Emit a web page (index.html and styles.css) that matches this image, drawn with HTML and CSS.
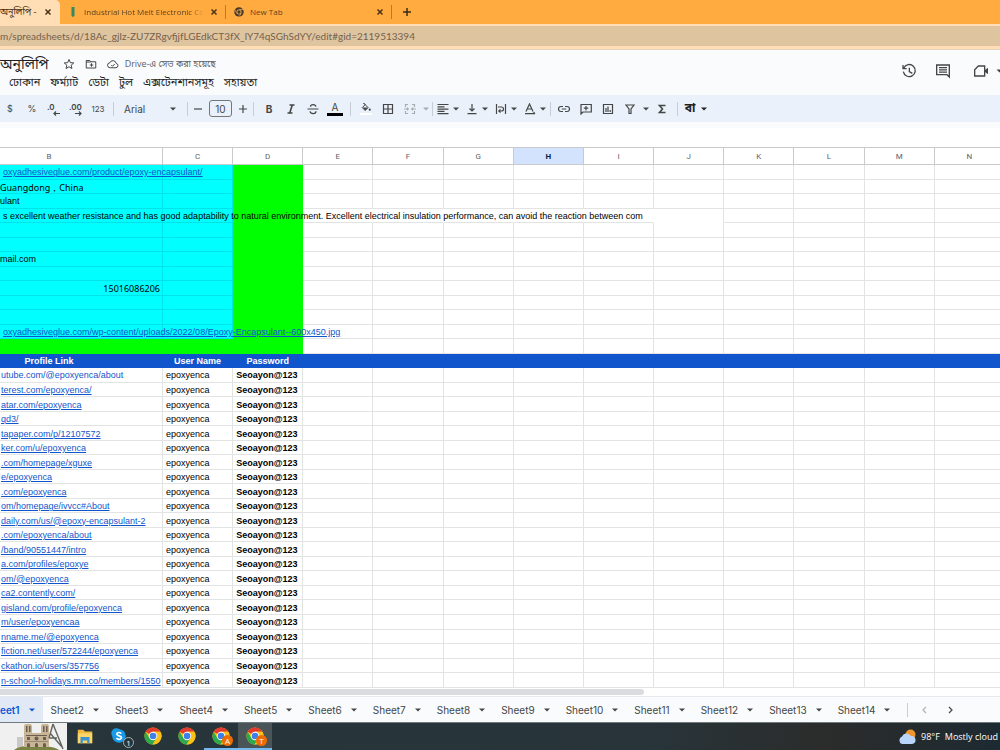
FILE: index.html
```html
<!DOCTYPE html>
<html lang="bn">
<head>
<meta charset="utf-8">
<title>অনুলিপি</title>
<link rel="stylesheet" href="styles.css">
</head>
<body>
<svg class="defs" width="0" height="0" aria-hidden="true">
  <defs>
    <symbol id="x" viewBox="0 0 8 8"><path d="M1.500 1.500l5 5M6.500 1.500l-5 5" stroke="#4a3217" stroke-width="1.500" fill="none"/></symbol>
    <symbol id="caret" viewBox="0 0 6 4"><path d="M0 .5h6L3 3.5z" fill="currentColor"/></symbol>
    <symbol id="chrome" viewBox="0 0 20 20">
      <circle cx="10" cy="10" r="9.5" fill="#fbc116"/>
      <path d="M10 10L1.8 5.2A9.5 9.5 0 0 1 18.2 5.3H10z" fill="#e33b2e"/>
      <path d="M1.8 5.2A9.5 9.5 0 0 0 9.6 19.5L14 12.3 10 10 6 12.3z" fill="#2da94f"/>
      <path d="M10 5.3h8.2a9.5 9.5 0 0 1-8.6 14.2L14 12.3z" fill="#fbc116"/>
      <circle cx="10" cy="10" r="4.7" fill="#fff"/><circle cx="10" cy="10" r="3.7" fill="#3f7fe8"/>
    </symbol>
  </defs>
</svg>

<div class="tabstrip">
  <div class="tab current"><span class="tab-title">অনুলিপি -</span><button aria-label="Close tab"><svg><use href="#x"/></svg></button></div>
  <div class="tab second">
    <svg class="fav" viewBox="0 0 10 10"><path d="M3.500 0h3v9l-1.500 1-1.500-1z" fill="#2f8b62"/></svg>
    <span class="tab-title fade">Industrial Hot Melt Electronic Co</span><button aria-label="Close tab"><svg><use href="#x"/></svg></button>
  </div>
  <div class="tab third">
    <svg class="fav" viewBox="0 0 20 20"><circle cx="10" cy="10" r="9.500" fill="#4c3a25"/><path d="M10 5h9M5.500 12.500L1.500 5M14.500 12.500L10 19.500" stroke="#dfa45a" stroke-width="1.500"/><circle cx="10" cy="10" r="5" fill="#e6ac62"/><circle cx="10" cy="10" r="3.300" fill="#4c3a25"/></svg>
    <span class="tab-title">New Tab</span><button aria-label="Close tab"><svg><use href="#x"/></svg></button>
  </div>
  <button class="new-tab" aria-label="New tab"><svg viewBox="0 0 10 10"><path d="M5 1v8M1 5h8" stroke="#3f2c14" stroke-width="1.500"/></svg></button>
</div>
<div class="address"><input aria-label="Address" value="m/spreadsheets/d/18Ac_gjIz-ZU7ZRgvfjjfLGEdkCT3fX_lY74qSGhSdYY/edit#gid=2119513394"></div>

<header class="doc-head">
  <div class="doc-left">
    <div class="title-row">
      <h1>অনুলিপি</h1>
      <button aria-label="Star"><svg viewBox="0 0 24 24"><path d="M12 3l2.700 6.300 6.800.6-5.200 4.500 1.600 6.700L12 17.500l-5.900 3.600 1.600-6.700-5.200-4.500 6.800-.6z" class="line"/></svg></button>
      <button aria-label="Move"><svg viewBox="0 0 24 24"><path d="M2.500 5h7l2 2.500h10V20h-19zM2.500 8h9M13 10.500v7M9.500 14h7" class="line"/></svg></button>
      <button aria-label="Cloud status"><svg viewBox="0 0 24 24"><path d="M6.500 19.500a5 5 0 0 1-.7-10 6.500 6.500 0 0 1 12.500 1.300 4.400 4.400 0 0 1-.3 8.700zM8.500 14l2.500 2.500 4.500-4.500" class="line"/></svg></button>
      <span class="saved">Drive-এ সেভ করা হয়েছে</span>
    </div>
    <nav class="menus"><button>ঢোকান</button><button>ফর্ম্যাট</button><button>ডেটা</button><button>টুল</button><button>এক্সটেনশানসমূহ</button><button>সহায়তা</button></nav>
  </div>
  <div class="doc-right">
    <button aria-label="Version history"><svg viewBox="0 0 24 24"><path d="M4.200 7.500A9 9 0 1 1 3.500 13M3 3v5.500h5.500M12.500 7v6l4.500 2.500" class="line"/></svg></button>
    <button aria-label="Comments"><svg viewBox="0 0 24 24"><path d="M2.500 3h19v18l-3.500-3.500H2.500zM6 7h12M6 10.300h12M6 13.600h12" class="line"/></svg></button>
    <button aria-label="Meet" class="meet"><svg viewBox="0 0 24 24"><path d="M8 4.500h9.500v15H2.500V10z" class="line"/><path d="M17.500 11l5-4v10l-5-4z" fill="#444746"/></svg><svg class="caret"><use href="#caret"/></svg></button>
  </div>
</header>

<div class="toolbar" role="toolbar" aria-label="Formatting">
  <button class="dollar">$</button><button class="percent">%</button>
  <button aria-label="Decrease decimals"><svg class="wide" viewBox="0 0 14 14"><text x="0" y="8" class="glyph">.0</text><path d="M13 11.500H7M9 9.500l-2 2 2 2" class="thin"/></svg></button>
  <button aria-label="Increase decimals"><svg class="wide" viewBox="0 0 14 14"><text x="0" y="8" class="glyph">.00</text><path d="M6 11.500h6M10 9.500l2 2-2 2" class="thin"/></svg></button>
  <button class="small">123</button>
  <i class="sep"></i>
  <button class="font">Arial<svg class="caret"><use href="#caret"/></svg></button>
  <i class="sep"></i>
  <button class="step" aria-label="Smaller"><svg viewBox="0 0 10 10"><path d="M1 5h8" class="thin"/></svg></button>
  <input class="size" aria-label="Font size" value="10">
  <button class="step" aria-label="Larger"><svg viewBox="0 0 10 10"><path d="M1 5h8M5 1v8" class="thin"/></svg></button>
  <i class="sep"></i>
  <button class="bold">B</button>
  <button aria-label="Italic"><svg viewBox="0 0 12 12"><path d="M4.500 2h5M2.500 10h5M7.300 2L4.700 10" class="heavy"/></svg></button>
  <button aria-label="Strikethrough"><svg viewBox="0 0 12 12"><path d="M.5 6h11M9 3.700C8.500 1 3.500 1 3.500 3.700M3 8.300c.5 3 6 3 6 0" class="thin"/></svg></button>
  <button class="text-color" aria-label="Text colour"><span>A</span></button>
  <i class="sep"></i>
  <button class="fill" aria-label="Fill colour"><svg viewBox="0 0 12 12"><path d="M3 0l5.500 5.500L5 9 1.500 5.500 5 2z" class="thin"/><path d="M2 5.500h6.500L5 9z" fill="#444746"/><circle cx="10.500" cy="8" r="1.300" fill="#444746"/></svg></button>
  <button aria-label="Borders"><svg viewBox="0 0 12 12"><path d="M1.500 1.500h9v9h-9zM6 1.500v9M1.500 6h9" class="thin"/></svg></button>
  <button class="off" aria-label="Merge"><svg viewBox="0 0 12 12"><path d="M4 1.500H1.500V4M8 1.500h2.500V4M4 10.500H1.500V8M8 10.500h2.500V8M0 6h4M12 6H8M3 4.700L4.300 6 3 7.300M9 4.700L7.700 6 9 7.300" class="thin"/></svg></button>
  <button class="drop off" aria-label="Merge options"><svg class="caret"><use href="#caret"/></svg></button>
  <i class="sep snug-left"></i>
  <div class="pairs">
    <button aria-label="Horizontal align"><svg viewBox="0 0 12 12"><path d="M.5 1.500h11M.5 3.800h7M.5 6.100h11M.5 8.400h7M.5 10.700h11" class="thin"/></svg><svg class="caret"><use href="#caret"/></svg></button>
    <button aria-label="Vertical align"><svg viewBox="0 0 12 12"><path d="M6 1v7M3.500 5.500L6 8l2.500-2.500M1.500 10.700h9" class="thin"/></svg><svg class="caret"><use href="#caret"/></svg></button>
    <button aria-label="Wrapping"><svg viewBox="0 0 12 12"><path d="M1.500 1v10M10.500 1v10M3 4h3.500a2 2 0 0 1 0 4H4M5.500 6.300L3.800 8l1.700 1.700" class="thin"/></svg><svg class="caret"><use href="#caret"/></svg></button>
    <button aria-label="Rotation"><svg viewBox="0 0 12 12"><path d="M2 8.500L5.500 1 9 8.500M3.200 6h4.600M1 10.700h10M9.500 9.200l1.500 1.500" class="thin"/></svg><svg class="caret"><use href="#caret"/></svg></button>
  </div>
  <i class="sep snug-left"></i>
  <div class="inserts">
    <button aria-label="Link"><svg viewBox="0 0 12 12"><path d="M5 3.500H3a2.500 2.500 0 0 0 0 5h2M7 3.500h2a2.500 2.500 0 0 1 0 5H7M3.800 6h4.400" class="thin"/></svg></button>
    <button aria-label="Comment"><svg viewBox="0 0 12 12"><path d="M1 11V1.500h10.300v7.500H3zM6 3v4.500M3.800 5.200h4.500" class="thin"/></svg></button>
    <button aria-label="Chart"><svg viewBox="0 0 12 12"><path d="M1.500 1.500h9v9h-9zM4 5v4M6 3.500V9M8.200 7v2" class="thin"/></svg></button>
    <button aria-label="Filter"><svg viewBox="0 0 12 12"><path d="M2 2h8L7 6v4.500H5V6z" class="thin"/></svg></button>
  </div>
  <button class="drop" aria-label="Filter views"><svg class="caret"><use href="#caret"/></svg></button>
  <button aria-label="Functions"><svg viewBox="0 0 12 12"><path d="M9.500 2.500H3.500L6.500 6 3.500 9.500h6" class="heavy"/></svg></button>
  <i class="sep"></i>
  <button class="lang">বা<svg class="caret"><use href="#caret"/></svg></button>
</div>
<div class="formula"></div>

<main class="sheet"><table id="grid"></table></main>
<div class="scroll"><div class="thumb"></div></div>

<nav class="sheets" id="sheets"></nav>

<footer class="taskbar">
  <svg class="cathedral" viewBox="0 0 67 27" preserveAspectRatio="none">
    <path fill="#f0f0f0" d="M0 0h67v27H0z"/><path fill="#c9c9c9" d="M17 14h6v11h-6z"/>
    <path fill="#7b8342" d="M14 27q5-4 15-4h15q12 1 15 4z"/>
    <path fill="#c8b596" d="M24 3l1-2h6l1 2v7h9V3l1-2h6l1 2v21H24z"/>
    <path fill="#6b5d50" d="M26 3h1.500v6H26zM29 3h1.500v6H29zM43 3h1.500v6H43zM46 3h1.500v6H46zM26 12h21v1H26zM25 18h23v.6H25z"/>
    <circle cx="36.500" cy="15.500" r="2" fill="#6b5d50"/><path fill="#6b5d50" d="M27 24v-3q1.500-2 3 0v3zM35 24v-3q1.500-2 3 0v3zM43 24v-3q1.500-2 3 0v3zM27 14h3v3h-3zM43 14h3v3h-3z"/>
    <path d="M53 1l-4 14M53 1l10 25M50 10l12 14M49 15h8" stroke="#62645f" stroke-width="1.400" fill="none"/>
  </svg>
  <button class="app" aria-label="File Explorer"><svg viewBox="0 0 20 20"><path d="M2 3h6l2 2h8v13H2z" fill="#f2b93c"/><path d="M2 7h16v11H2z" fill="#fbd568"/><path d="M5 11h10v7h-2.500v-3h-5v3H5z" fill="#3c93cf"/></svg></button>
  <button class="app" aria-label="Skype"><svg viewBox="0 0 20 20"><circle cx="7" cy="7" r="5.500" fill="#1a9be6"/><circle cx="10" cy="10" r="7.500" fill="#1a9be6"/><path d="M12.500 7.300C11.500 5.500 7.500 5.600 7.500 7.900c0 2.500 5.200 1.400 5.200 3.900 0 2.400-4.200 2.500-5.400.4" stroke="#fff" stroke-width="1.800" fill="none"/></svg><span class="count">1</span></button>
  <button class="app" aria-label="Chrome"><svg><use href="#chrome"/></svg></button>
  <button class="app" aria-label="Chrome"><svg><use href="#chrome"/></svg></button>
  <button class="app running" aria-label="Chrome A"><svg><use href="#chrome"/></svg><span class="who">A</span></button>
  <button class="app running active" aria-label="Chrome T"><svg><use href="#chrome"/></svg><span class="who">T</span></button>
  <div class="weather"><svg viewBox="0 0 18 16"><circle cx="12.500" cy="5.500" r="5" fill="#f0952c"/><path d="M4 15a4 4 0 0 1 0-7.500 5 5 0 0 1 9-.5 4 4 0 0 1 1 8z" fill="#b9d6fa"/></svg><span>98°F</span><span>Mostly cloud</span></div>
</footer>
<script src="script.js"></script>
</body>
</html>
```
FILE: styles.css
```css
* { box-sizing: border-box; }
html, body { height: 100%; }
body {
  margin: 0;
  display: flex;
  flex-direction: column;
  overflow: hidden;
  background: #fff;
  color: #444746;
  font-family: "Open Sans", "Noto Sans", "Noto Sans Bengali", sans-serif;
}
button, input { font: inherit; color: inherit; border: 0; padding: 0; margin: 0; background: none; }
button { display: flex; align-items: center; justify-content: center; white-space: nowrap; }
svg { display: block; flex: none; }
.defs { position: absolute; }
.line { fill: none; stroke: #444746; stroke-width: 2; }
.thin { fill: none; stroke: currentColor; stroke-width: 1.2; }
.heavy { fill: none; stroke: currentColor; stroke-width: 1.6; }
.caret { width: 6px; height: 4px; }

/* browser chrome */
.tabstrip { flex: none; height: 24px; display: flex; align-items: center; background: #ffab40; color: #5c4322; font-size: 8px; overflow: hidden; }
.tab { height: 24px; display: flex; align-items: center; gap: 6px; white-space: nowrap; }
.tab-title { flex: 1; overflow: hidden; line-height: 16px; }
.tab button svg { width: 8px; height: 8px; }
.current { width: 60px; padding-right: 8px; background: #ffdeb5; border-radius: 0 5px 0 0; color: #3f2c14; font-size: 9px; }
.second { width: 166px; padding: 0 7px 0 8px; border-right: 1px solid #b77b2f; height: 14px; }
.third { width: 166px; padding: 0 7px 0 8px; border-right: 1px solid #b77b2f; height: 14px; }
.fav { width: 10px; height: 10px; }
.fade { -webkit-mask-image: linear-gradient(90deg, #000 88%, transparent); mask-image: linear-gradient(90deg, #000 88%, transparent); }
.new-tab { margin-left: 10px; }
.new-tab svg { width: 10px; height: 10px; }
.address { flex: none; padding: 2px 0 3px; height: 26px; background: #ffdeb5; border-bottom: 1px solid #e6d3bb; }
.address input { display: block; width: 100%; height: 20px; background: #dfc4a0; color: #75624b; font-family: Lato, sans-serif; font-size: 10px; outline: 0; }

/* document header */
.doc-head { flex: none; height: 45px; display: flex; justify-content: space-between; background: #f9fbfd; }
.doc-left { padding-top: 4px; }
.title-row { display: flex; align-items: center; height: 20px; }
h1 { margin: 0 14px 0 0; font-size: 14px; font-weight: 400; line-height: 20px; color: #1f1f1f; white-space: nowrap; }
.title-row button { margin-right: 10px; }
.title-row button svg { width: 12px; height: 12px; }
.title-row button:nth-of-type(3) { margin-right: 6px; }
.saved { font-size: 9px; line-height: 16px; color: #5f6368; white-space: nowrap; }
.menus { display: flex; gap: 10px; padding-left: 9px; font-size: 11px; line-height: 15px; color: #1f1f1f; }
.doc-right { display: flex; align-items: center; gap: 18px; padding-bottom: 3px; height: 44px; margin-right: -3px; }
.doc-right button > svg:first-child { width: 16px; height: 16px; }
.doc-right .meet { gap: 7px; margin-left: 4px; }
.doc-right .meet .caret { width: 7px; }

/* toolbar */
.toolbar { flex: none; height: 27px; display: flex; align-items: center; margin-left: -1px; background: #eaf1fa; font-family: Inter, sans-serif; font-size: 10px; }
.toolbar button { flex: none; width: 22px; height: 22px; }
.toolbar svg:not(.caret) { width: 12px; height: 12px; }
.toolbar svg.wide { width: 14px; height: 14px; overflow: visible; }
.glyph { font: 600 8px Inter, sans-serif; fill: #444746; }
.sep { flex: none; width: 1px; height: 14px; margin: 0 4px; background: #c7cdd6; }
.snug-left { margin-left: 1px; }
.toolbar .small, .toolbar .percent, .toolbar .dollar { font-size: 9px; }
.toolbar .small { font-size: 8px; }
.toolbar .font { width: 65px; padding: 0 7px 0 6px; justify-content: space-between; }
.toolbar .step { width: 12px; }
.toolbar .step svg { width: 10px; height: 10px; }
.size { width: 23px; height: 17px; margin: 0 5px; border: 1px solid #747775; border-radius: 3px; text-align: center; }
.toolbar .bold { font-weight: 700; }
.text-color span { width: 16px; border-bottom: 3px solid #000; line-height: 12px; }
.fill svg { border-bottom: 2px solid #fff; }
.off { opacity: .4; }
.toolbar .drop { width: 10px; }
.pairs { display: flex; gap: 4px; }
.toolbar .pairs button { width: 25px; justify-content: flex-start; gap: 4px; }
.inserts { display: flex; margin-left: -2px; }
.toolbar .lang { width: 28px; gap: 6px; font-size: 12px; font-weight: 700; color: #1f1f1f; font-family: "Noto Sans Bengali", "Noto Sans", sans-serif; }
.formula { flex: none; height: 25px; background: #fff; border-top: 6px solid #f9fbfd; }

/* grid */
.sheet { flex: 1; min-height: 0; overflow: hidden; }
table { width: calc(100% + 5px); height: 100%; table-layout: fixed; border-collapse: separate; border-spacing: 0; font-family: "Liberation Sans", Arial, sans-serif; font-size: 9px; line-height: 11px; color: #000; }
th, td { padding: 0; border: 0 solid #e2e3e3; border-width: 0 1px 1px 0; white-space: nowrap; text-align: left; }
tbody th, tbody td { padding-top: 2px; }
thead th { height: 18px; border-color: #c8cacc; border-top: 1px solid #c8cacc; text-align: center; font-family: Roboto, sans-serif; font-size: 8px; font-weight: 400; color: #5f6368; }
thead .first { width: 163px; }
thead .first, .band .first { padding-right: 64px; }
thead .picked { background: #d3e3fd; color: #041e49; font-weight: 700; }
.cyan { background: #0ff; border-color: #00e3e8; }
.green { background: #0f0; border-color: #0f0; }
.band, .band th { background: #1155cc; border-color: #1155cc; }
.band th { color: #fff; text-align: center; font-weight: 700; }
td a { color: #1155cc; text-decoration: underline; }
.plain a { text-decoration: none; }
.clip { overflow: hidden; padding-left: 1px; }
.lead { padding-left: 3px; }
.number { padding-right: 2px; text-align: right; font-family: "Noto Sans", sans-serif; }
.wide-face { font-family: "Noto Sans", sans-serif; }
.user { padding-left: 3px; }
.pass { padding-left: 3px; font-weight: 700; }
.open { border-right-color: transparent; }
.cover { background: #fff; border-bottom-color: #fff; }
.scroll { flex: none; height: 9px; padding: 1px 0; border-bottom: 1px solid #e6e9ed; }
.thumb { width: 64.4%; height: 6px; border-radius: 0 3px 3px 0; background: #dadce0; }

/* sheet tabs */
.sheets { flex: none; height: 25px; display: flex; align-items: stretch; background: #f9fbfd; font-family: Inter, sans-serif; font-size: 10px; }
.sheets .name { padding: 0 8px; gap: 9px; color: #444746; }
.sheets .on { padding-left: 0; background: #e1e9f7; color: #0b57d0; font-weight: 600; }
.sheets .sep { align-self: center; margin: 0 12px 0 9px; }
.sheets .arrow { width: 8px; margin-right: 19px; }
.sheets .arrow svg { width: 6px; height: 8px; }
.faded { opacity: .4; }

/* taskbar */
.taskbar { flex: none; height: 28px; display: flex; align-items: stretch; overflow: hidden; border-top: 1px solid #6f7a7d; background: linear-gradient(90deg, #27363b, #28343a 65%, #2b2c2b 83%, #1d2a32); color: #fff; }
.cathedral { width: 67px; height: 27px; margin-right: 1px; }
.app { position: relative; flex: none; width: 34px; border-bottom: 2px solid transparent; }
.app svg { width: 18px; height: 18px; }
.running { border-bottom-color: #76b9ed; background-clip: padding-box; }
.active { background-color: #4b5558; }
.count, .who { position: absolute; right: 2px; bottom: 0; width: 11px; height: 11px; border-radius: 50%; text-align: center; font: 8px/11px "Open Sans", sans-serif; }
.count { background: #27343a; border: 1px solid #aab1b4; line-height: 9px; }
.who { right: 5px; bottom: 2px; background: #ef6c00; }
.weather { display: flex; flex: none; align-items: center; gap: 5px; width: 102px; margin-left: auto; white-space: nowrap; font-size: 9px; }
.weather svg { width: 18px; height: 16px; }
```
FILE: script.js
```js
const columns = ["B", "C", "D", "E", "F", "G", "H", "I", "J", "K", "L", "M", "N"];
const info = [
  { link: "oxyadhesiveglue.com/product/epoxy-encapsulant/", css: "lead" },
  { text: "Guangdong，China", css: "wide-face" },
  { text: "ulant" },
  { text: "s excellent weather resistance and has good adaptability to natural environment. Excellent electrical insulation performance, can avoid the reaction between com", css: "lead", long: true },
  {}, {},
  { text: "mail.com" },
  {},
  { text: "15016086206", css: "number" },
  {}, {},
  { link: "oxyadhesiveglue.com/wp-content/uploads/2022/08/Epoxy-Encapsulant--600x450.jpg", css: "lead" },
  { allGreen: true }
];
const profiles = [
  "utube.com/@epoxyenca/about", "terest.com/epoxyenca/", "atar.com/epoxyenca", "qd3/",
  "tapaper.com/p/12107572", "ker.com/u/epoxyenca", ".com/homepage/xguxe", "e/epoxyenca",
  ".com/epoxyenca", "om/homepage/ivvcc#About", "daily.com/us/@epoxy-encapsulant-2",
  ".com/epoxyenca/about", "/band/90551447/intro", "a.com/profiles/epoxye", "om/@epoxyenca",
  "ca2.contently.com/", "gisland.com/profile/epoxyenca", "m/user/epoxyencaa",
  "nname.me/@epoxyenca", "fiction.net/user/572244/epoxyenca", "ckathon.io/users/357756",
  "n-school-holidays.mn.co/members/1550"
];
const anchor = (t) => `<a href="#">${t}</a>`;
const blanks = (n) => "<td></td>".repeat(n);

let html = "<thead><tr>" + columns.map((c, i) =>
  `<th scope="col" class="${i === 0 ? "first" : ""}${c === "H" ? "picked" : ""}">${c}</th>`).join("") + "</tr></thead><tbody>";

info.forEach((row) => {
  const side = row.allGreen ? "green" : "cyan";
  const content = row.link ? anchor(row.link) : row.text || "&nbsp;";
  html += `<tr><td class="${side} ${row.css || ""}">${content}</td><td class="${side}"></td><td class="green"></td>`;
  html += row.long
    ? '<td class="open"></td>'.repeat(5) + '<td class="cover"></td>' + blanks(4)
    : blanks(10);
  html += "</tr>";
});
html += '<tr class="band"><th class="first">Profile Link</th><th>User Name</th><th>Password</th>' + "<th></th>".repeat(10) + "</tr>";
profiles.forEach((p, i) => {
  html += `<tr><td class="clip${i === 0 ? " plain" : ""}">${anchor(p)}</td><td class="user">epoxyenca</td><td class="pass">Seoayon@123</td>${blanks(10)}</tr>`;
});
document.getElementById("grid").innerHTML = html + "</tbody>";

const caret = '<svg class="caret"><use href="#caret"/></svg>';
const chevron = (d) => `<svg viewBox="0 0 6 8"><path d="${d}" class="thin"/></svg>`;
let tabs = "";
for (let n = 1; n <= 14; n++) {
  const label = n === 1 ? "eet1" : `Sheet${n}`;
  tabs += `<button class="name${n === 1 ? " on" : ""}">${label}${caret}</button>`;
}
tabs += '<i class="sep"></i><button class="arrow faded" aria-label="Previous">' + chevron("M5 1L2 4l3 3") +
  '</button><button class="arrow" aria-label="Next">' + chevron("M1 1l3 3-3 3") + "</button>";
document.getElementById("sheets").innerHTML = tabs;
```
